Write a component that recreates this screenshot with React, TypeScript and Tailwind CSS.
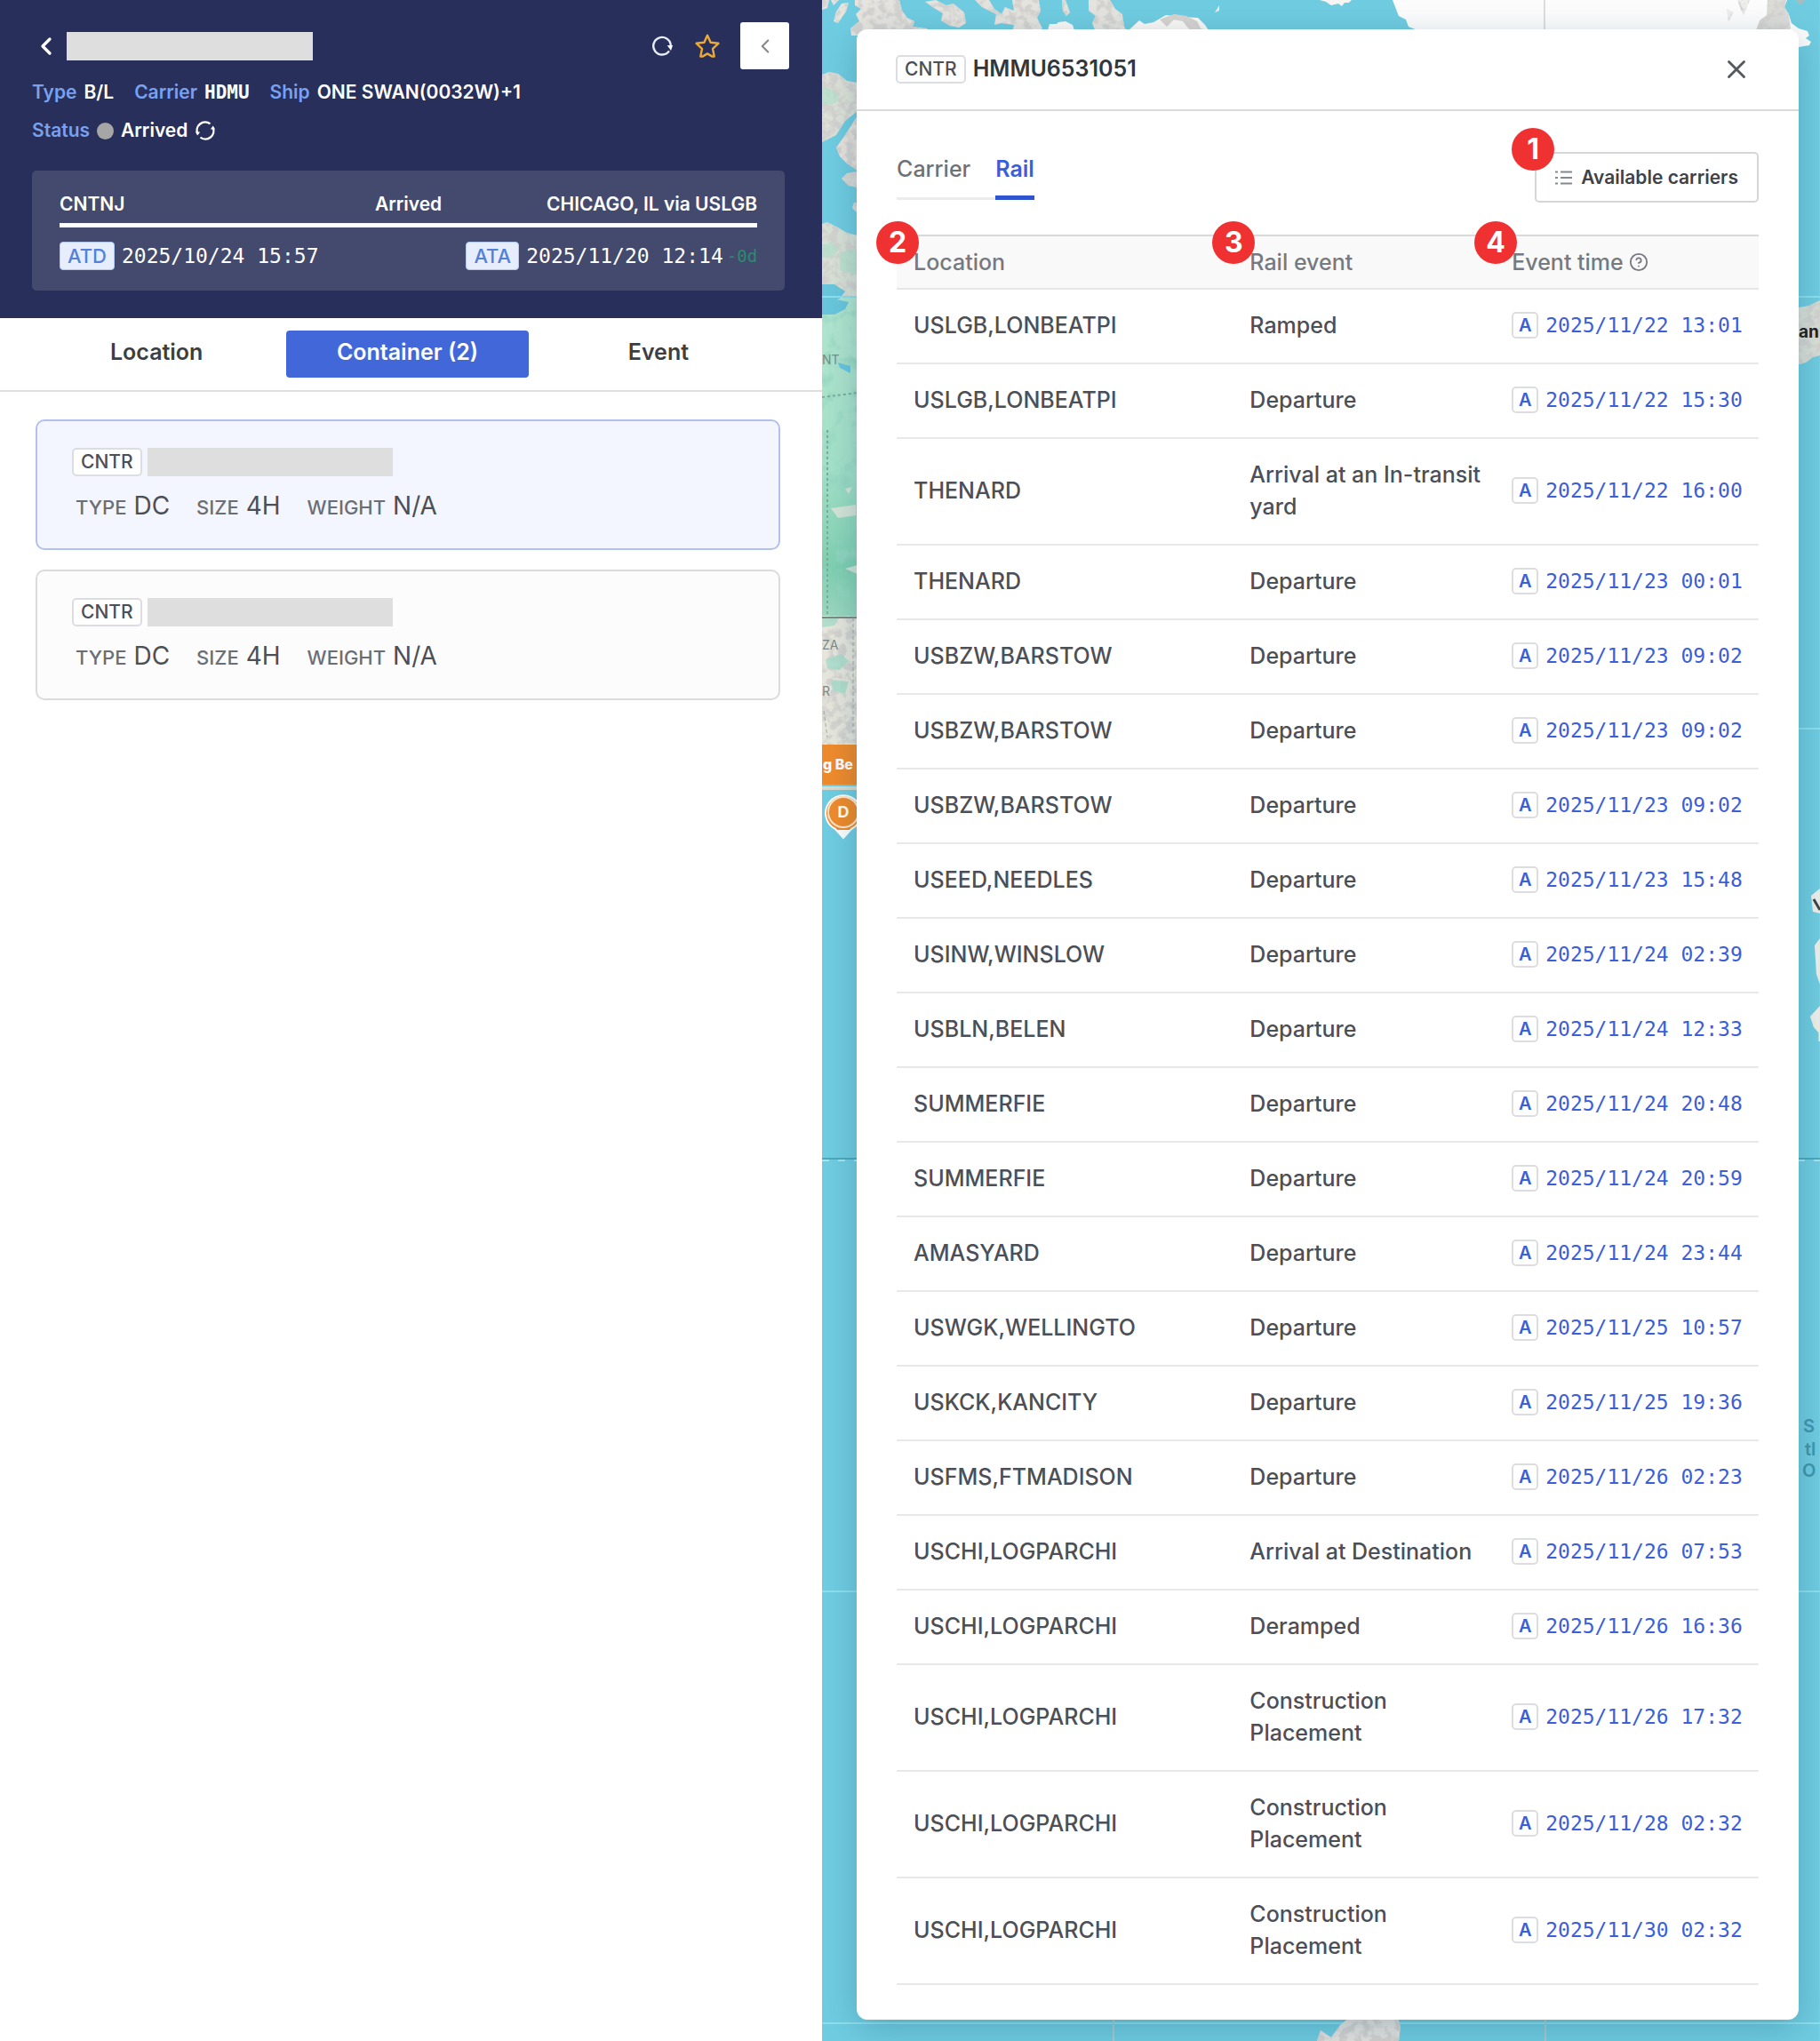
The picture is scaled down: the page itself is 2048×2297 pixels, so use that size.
import { ChevronLeft, CircleHelp, X } from "lucide-react";
import { useState } from "react";

const MONO = "font-['DejaVu_Sans_Mono',monospace]";

type RailEvent = { location: string; event: string; time: string };

const events: RailEvent[] = [
  { location: "USLGB,LONBEATPI", event: "Ramped", time: "2025/11/22 13:01" },
  { location: "USLGB,LONBEATPI", event: "Departure", time: "2025/11/22 15:30" },
  { location: "THENARD", event: "Arrival at an In-transit yard", time: "2025/11/22 16:00" },
  { location: "THENARD", event: "Departure", time: "2025/11/23 00:01" },
  { location: "USBZW,BARSTOW", event: "Departure", time: "2025/11/23 09:02" },
  { location: "USBZW,BARSTOW", event: "Departure", time: "2025/11/23 09:02" },
  { location: "USBZW,BARSTOW", event: "Departure", time: "2025/11/23 09:02" },
  { location: "USEED,NEEDLES", event: "Departure", time: "2025/11/23 15:48" },
  { location: "USINW,WINSLOW", event: "Departure", time: "2025/11/24 02:39" },
  { location: "USBLN,BELEN", event: "Departure", time: "2025/11/24 12:33" },
  { location: "SUMMERFIE", event: "Departure", time: "2025/11/24 20:48" },
  { location: "SUMMERFIE", event: "Departure", time: "2025/11/24 20:59" },
  { location: "AMASYARD", event: "Departure", time: "2025/11/24 23:44" },
  { location: "USWGK,WELLINGTO", event: "Departure", time: "2025/11/25 10:57" },
  { location: "USKCK,KANCITY", event: "Departure", time: "2025/11/25 19:36" },
  { location: "USFMS,FTMADISON", event: "Departure", time: "2025/11/26 02:23" },
  { location: "USCHI,LOGPARCHI", event: "Arrival at Destination", time: "2025/11/26 07:53" },
  { location: "USCHI,LOGPARCHI", event: "Deramped", time: "2025/11/26 16:36" },
  { location: "USCHI,LOGPARCHI", event: "Construction Placement", time: "2025/11/26 17:32" },
  { location: "USCHI,LOGPARCHI", event: "Construction Placement", time: "2025/11/28 02:32" },
  { location: "USCHI,LOGPARCHI", event: "Construction Placement", time: "2025/11/30 02:32" },
];

const RefreshIcon = ({ split = false }: { split?: boolean }) => (
  <svg width="24" height="24" viewBox="0 0 24 24" fill="none" aria-hidden="true">
    {split ? (
      <>
        <path d="M3.4 15.6A9.3 9.3 0 0 1 17.5 4.4M20.6 8.4A9.3 9.3 0 0 1 6.5 19.6" stroke="#fff" strokeWidth="2.4" />
        <path d="M1 13.4h5.2L3.2 17.6zM23 10.6h-5.2l3-4.2z" fill="#fff" />
      </>
    ) : (
      <>
        <path d="M20 17.4A9.8 9.8 0 1 1 21.8 11" stroke="#e8edfb" strokeWidth="2.4" />
        <path d="M17.8 11H24l-2 6z" fill="#fff" />
      </>
    )}
  </svg>
);

const StarIcon = () => (
  <svg width="30" height="30" viewBox="0 0 30 30" fill="none" aria-hidden="true">
    <path
      d="M15 2.8l3.6 8 8.8 1-6.4 6 1.7 8.8h-2.2L15 23.4l-5.5 3.2H7.3L9 17.8l-6.4-6 8.8-1z"
      stroke="#eba937"
      strokeWidth="2.4"
      strokeLinejoin="round"
    />
  </svg>
);

const ListIcon = () => (
  <svg width="19" height="18" viewBox="0 0 19 18" fill="none" stroke="#85888d" strokeWidth="1.8" aria-hidden="true">
    <path d="M6 2.5h13M6 9h13M6 15.5h13M0 2.5h3M0 9h3M0 15.5h3" />
  </svg>
);

const Marker = ({ n, className }: { n: number; className: string }) => (
  <span
    className={`absolute z-10 flex size-12 items-center justify-center rounded-full bg-[#ef3131] text-[32px] leading-none font-bold text-white ${className}`}
  >
    {n}
  </span>
);

const CntrTag = () => (
  <span className="flex h-8 items-center rounded-[5px] border-2 border-[#dcdde0] bg-white px-2 text-[21px] font-medium text-[#4c4f55]">
    CNTR
  </span>
);

const MapBackground = () => (
  <svg
    className="absolute inset-0 h-full w-full"
    viewBox="0 0 1123 2297"
    preserveAspectRatio="none"
    aria-hidden="true"
  >
    <defs>
      <filter id="terrain" x="0" y="0" width="100%" height="100%">
        <feTurbulence type="fractalNoise" baseFrequency="0.11" numOctaves="3" seed="4" result="noise" />
        <feColorMatrix
          in="noise"
          type="matrix"
          values="0 0 0 0 0.66  0 0 0 0 0.65  0 0 0 0 0.63  5 0 0 0 -2.1"
          result="shade"
        />
        <feComposite in="shade" in2="SourceGraphic" operator="in" result="clipped" />
        <feMerge>
          <feMergeNode in="SourceGraphic" />
          <feMergeNode in="clipped" />
        </feMerge>
      </filter>
      <filter id="forest" x="0" y="0" width="100%" height="100%">
        <feTurbulence type="fractalNoise" baseFrequency="0.06" numOctaves="3" seed="9" result="noise" />
        <feColorMatrix
          in="noise"
          type="matrix"
          values="0 0 0 0 0.3  0 0 0 0 0.68  0 0 0 0 0.54  3 0 0 0 -1.5"
          result="shade"
        />
        <feComposite in="shade" in2="SourceGraphic" operator="in" result="clipped" />
        <feMerge>
          <feMergeNode in="SourceGraphic" />
          <feMergeNode in="clipped" />
        </feMerge>
      </filter>
      <linearGradient id="green" x1="0" y1="0" x2="0" y2="1">
        <stop offset="0" stopColor="#b3e6d0" />
        <stop offset="0.55" stopColor="#a4e2c9" />
        <stop offset="0.85" stopColor="#7fd0b1" />
        <stop offset="1" stopColor="#9bd8bf" />
      </linearGradient>
    </defs>
    <rect width="1123" height="2297" fill="#70cde1" />

    {/* arctic islands */}
    <g fill="#e6e4df" filter="url(#terrain)">
      <path d="M0 0h8l-2 9-6 2zM10 0h9l-6 6zM22 4l8-1-3 10-9 13-5-2 3-11z" />
      <path d="M37 0h50l3 12 6 8 8 4-2 6 16 2 4 8H33l-1-8 10-8-4-8 6-6-7-4z" />
      <path d="M116 2l12-2 12 6 8-2 12 10 2 12-8 5-10-2-10-6 2-8-10-6z" />
      <path d="M172 0h16l6 10 8 6 4-8 10 4-2-12h30l2 12-4 8 6 12-8 6h-26l2-10-14-2-8 2 2-12-16-8z" />
      <path d="M270 0h4l5 14-4 4-4-6z" />
      <path d="M300 0h24l6 10 8 6 2 14 4 6h-36l-4-10 4-8-8-6z" />
    </g>
    <path d="M254 34l2-7h8l2-2 8-1 8 4 2 6zM345 34l12-11 6 4 10-2 14-8 18 2 18 1 8 8 4 6 10 5z" fill="#fbf9f6" />
    <path d="M380 22l16-6 14 2 12 6 4 8 8 2h-20l-8-10-10-2-8 8z" fill="#d9d5d1" filter="url(#terrain)" />
    <path d="M442 14l5-8v6z" fill="#eceff1" />

    {/* greenland */}
    <path d="M560 0h36l-3 3h-5l-3 4-4-3-8 2-6-4z" fill="#f7f6f4" />
    <path d="M642 0h444l-3 8 5 8 3 10 8 6 10 3 2 5-4 3 6 4-2 4-12 2-20 8H670l3-17-3-10-10-4-3-8-8-4z" fill="#fdfdfd" />
    <path d="M1064 0h21l-2 8 5 8 2 16-5 3h-34l4-12 8-6z" fill="#dcdcd9" filter="url(#terrain)" />
    <path d="M1030 0h14l-7 18zM1018 10l8 4-6 10z" fill="#eeeeec" filter="url(#terrain)" />
    <path d="M1096 0h10l-5 6z" fill="#a9bcbd" />
    <path d="M813 0v33" stroke="#dedede" strokeWidth="2" />

    {/* northern canada */}
    <g filter="url(#terrain)">
      <path d="M0 84l8-3 10 2 10 8 12 2v32L26 136l-10 16-16 8z" fill="#dfe3d8" />
      <path d="M40 130v62l-12-8-8-8-4-10 10-14z" fill="#ebe3dc" />
      <path d="M40 193v18l-10-2-8-8 6-6zM40 228v12l-6-6 2-6z" fill="#dcdcd8" />
      <path d="M0 252l6-2 12 6 10 6 12 3v80H0z" fill="#d9e2d6" />
    </g>
    <path d="M0 98l14 4 6 10-8 6-12-2zM0 276l12-4 6 10-8 8H0zM20 284l20-4v30l-20-6z" fill="#b4e2cd" opacity=".7" />
    <g filter="url(#forest)">
      <rect y="334" width="42" height="359" fill="url(#green)" />
    </g>
    <path d="M0 320h14l12 8-6 8-20 6zM0 340l12-4 18 4-4 8-12 6H0zM18 408l14 4v8l-12-6z" fill="#69c7dd" />
    <path d="M10 572l28-4v12l-20 3zM26 550l8-2-4 8zM26 640l14-4v10z" fill="#e5e7dd" opacity=".8" />
    <path d="M0 447l40-5M6 484v208" stroke="#7faa9c" strokeWidth="2" strokeDasharray="3 3" fill="none" />

    {/* west coast */}
    <g filter="url(#terrain)">
      <rect y="693" width="42" height="145" fill="#e7e7dc" />
    </g>
    <path d="M4 742l18-6 8 8-10 10-14-2zM10 765l20 2-4 14-14-4zM0 694h20l-6 10-14 2z" fill="#a6dfca" opacity=".8" />
    <path d="M0 695h42" stroke="#7d8b83" strokeWidth="2" />
    <path d="M35 695v130M2 800l4 30" stroke="#a3aca4" strokeWidth="1" fill="none" strokeDasharray="4 3" />
    <g fill="#7d8a88" fontFamily="Inter, sans-serif" fontSize="14">
      <text x="0" y="410">NT</text>
      <text x="0" y="731">ZA</text>
      <text x="0" y="783">R</text>
    </g>

    {/* graticule */}
    <path d="M0 334h42M1095 334h28M1095 820h28M0 1791h1123M0 2277h1123" stroke="#8de1ee" strokeWidth="2" />
    <path d="M0 1304h1123" stroke="#4fa8bd" strokeWidth="2" />
    <path d="M0 1306h1123" stroke="#a5e6f0" strokeWidth="2" strokeDasharray="8 10" />
    <path d="M328 2273v24M814 2273v24" stroke="#a6cbd2" strokeWidth="2" />

    {/* port label and pin */}
    <rect y="838" width="50" height="45" fill="#f08b2c" />
    <text x="1" y="866" fill="#fff" fontFamily="Inter, sans-serif" fontSize="16" fontWeight="800">
      g Be
    </text>
    <path d="M0 885h40v4H0z" fill="#d8ddd0" />
    <path d="M24 943l-9-10a20 20 0 1 1 18 0z" fill="#f08b2c" stroke="#fff" strokeWidth="2" />
    <path d="M16 934h16l-8 9z" fill="#fff" />
    <circle cx="24" cy="914" r="17" fill="#f08b2c" stroke="#ffe7cc" strokeWidth="2" />
    <text x="24" y="920" textAnchor="middle" fill="#fff" fontFamily="Inter, sans-serif" fontSize="18" fontWeight="700">
      D
    </text>

    {/* iceland, africa and the south atlantic */}
    <path d="M1099 346l12-2 12-6v62l-8 2-8 6-8 2z" fill="#dbe1d7" filter="url(#terrain)" />
    <text x="1099" y="380" fill="#222" fontFamily="Inter, sans-serif" fontSize="19" fontWeight="700">
      an
    </text>
    <path d="M1113 1008l10-8v28l-8-2zM1117 1064l6-8v52l-4-12zM1112 1144l11-12v32l-7-8z" fill="#eef1ec" />
    <path d="M1116 1012l7 12" stroke="#444" strokeWidth="3" />
    <path d="M1117 1148q0 8 6 10v14" stroke="#f0efdd" strokeWidth="3" fill="none" />
    <g fill="#4196ad" fontFamily="Inter, sans-serif" fontSize="20" fontWeight="600">
      <text x="1104" y="1612">S</text>
      <text x="1106" y="1638">tl</text>
      <text x="1103" y="1662">O</text>
    </g>

    {/* antarctica */}
    <path d="M597 2268h50l4 13-2 16h-92l4-12 12 8 10-14z" fill="#e6e4e1" filter="url(#terrain)" />
  </svg>
);

const ContainerCard = ({ selected = false }: { selected?: boolean }) => (
  <article
    className={`rounded-[10px] border-2 pt-[30px] pr-4 pb-[26px] pl-[39px] ${
      selected ? "border-[#b3c1ea] bg-[#f3f6fe]" : "border-[#dbdbdb] bg-[#fcfcfc]"
    }`}
  >
    <div className="flex items-center gap-[6px]">
      <CntrTag />
      <span className="h-8 w-[276px] bg-[#dedede]" />
    </div>
    <dl className="mt-[13px] flex gap-[30px] pl-1 text-[28px] leading-10 text-[#4c4f55]">
      {[
        ["TYPE", "DC"],
        ["SIZE", "4H"],
        ["WEIGHT", "N/A"],
      ].map(([label, value]) => (
        <div key={label} className="flex items-baseline gap-2">
          <dt className="text-[22px] font-medium text-[#6b6e75]">{label}</dt>
          <dd>{value}</dd>
        </div>
      ))}
    </dl>
  </article>
);

const TimeTag = ({ label, time }: { label: string; time: string }) => (
  <div className="flex h-8 items-center gap-2">
    <span className="flex h-8 items-center rounded-[4px] border border-[#b3caf8] bg-[#e6eefd] px-2 text-[22px] font-medium text-[#5580d8]">
      {label}
    </span>
    <span className={`${MONO} text-[23px]`}>{time}</span>
  </div>
);

const TrackingPanel = () => {
  const [tab, setTab] = useState("Container (2)");
  return (
    <aside className="w-[45.17%] shrink-0 bg-white">
      <header className="bg-[#272f5a] pt-[25px] pr-[42px] pb-[31px] pl-[36px]">
        <div className="flex h-[53px] items-center">
          <button aria-label="Back" className="text-white">
            <ChevronLeft size={32} strokeWidth={2.5} />
          </button>
          <span className="ml-[7px] h-8 w-[277px] bg-[#dedede]" />
          <div className="ml-auto flex items-center gap-6">
            <button aria-label="Refresh">
              <RefreshIcon />
            </button>
            <button aria-label="Add to favorites">
              <StarIcon />
            </button>
            <button
              aria-label="Collapse panel"
              className="-mr-[5px] -ml-[2px] flex h-[53px] w-[55px] items-center justify-center rounded-[3px] bg-white text-[#8a8a8a]"
            >
              <ChevronLeft size={26} />
            </button>
          </div>
        </div>
        <div className="mt-[10px] flex flex-wrap gap-x-[23px] text-[21px] leading-8 font-semibold text-white">
          <div className="flex gap-2">
            <span className="text-[#78a2f0]">Type</span>
            <span>B/L</span>
          </div>
          <div className="flex gap-2">
            <span className="text-[#78a2f0]">Carrier</span>
            <span className={MONO}>HDMU</span>
          </div>
          <div className="flex gap-2">
            <span className="text-[#78a2f0]">Ship</span>
            <span>ONE SWAN(0032W)+1</span>
          </div>
        </div>
        <div className="mt-[11px] flex items-center gap-2 text-[21px] leading-8 font-semibold text-white">
          <span className="text-[#78a2f0]">Status</span>
          <span className="size-[19px] rounded-full bg-[#a6a6a6]" />
          <span>Arrived</span>
          <RefreshIcon split />
        </div>

        <section className="mt-[29px] rounded-[5px] bg-[#434a6d] px-[31px] pt-[22px] pb-[23px] text-white">
          <div className="flex justify-between text-[21px] leading-8 font-semibold">
            <span className="flex-1">CNTNJ</span>
            <span>Arrived</span>
            <span className="flex-1 text-right">CHICAGO, IL via USLGB</span>
          </div>
          <div className="mt-[5px] h-[5px] bg-white" />
          <div className="mt-4 flex items-center justify-between">
            <TimeTag label="ATD" time="2025/10/24 15:57" />
            <div className="flex items-center gap-1">
              <TimeTag label="ATA" time="2025/11/20 12:14" />
              <span className={`${MONO} text-[19px] leading-8 text-[#2c8a70]`}>-0d</span>
            </div>
          </div>
        </section>
      </header>

      <nav className="grid grid-cols-3 gap-[10px] border-b-2 border-[#dedede] pt-[14px] pr-12 pb-[14px] pl-10">
        {["Location", "Container (2)", "Event"].map((name) => (
          <button
            key={name}
            onClick={() => setTab(name)}
            className={`h-[53px] rounded-[4px] pb-[3px] text-[25px] font-semibold ${
              tab === name ? "bg-[#4267d8] text-white" : "text-[#3c3e42]"
            }`}
          >
            {name}
          </button>
        ))}
      </nav>

      <div className="flex flex-col gap-[22px] pt-[31px] pr-[47px] pl-10">
        <ContainerCard selected />
        <ContainerCard />
      </div>
    </aside>
  );
};

const RailModal = () => {
  const [tab, setTab] = useState("Rail");
  return (
    <section className="relative rounded-xl bg-white pb-[39px] shadow-[0_10px_40px_rgba(0,60,90,0.25)]">
      <header className="flex h-[92px] items-center gap-2 border-b-2 border-[#d9dadc] pr-[53px] pl-11">
        <CntrTag />
        <h1 className="text-[25px] font-semibold text-[#33363c]">HMMU6531051</h1>
        <button aria-label="Close" className="ml-auto text-[#55585d]">
          <X size={34} strokeWidth={2} />
        </button>
      </header>

      <div className="px-[45px]">
        <div className="flex items-start justify-between pt-[46px]">
          <div className="mt-[3px] flex h-[51px] text-[25px] leading-8 font-medium">
            {["Carrier", "Rail"].map((name) => (
              <button
                key={name}
                onClick={() => setTab(name)}
                className={
                  tab === name
                    ? "border-b-[5px] border-[#2f54cf] pb-[14px] font-semibold text-[#3a5fd9]"
                    : "border-b-[3px] border-[#ececec] pr-7 pb-4 text-[#6e7177]"
                }
              >
                {name}
              </button>
            ))}
          </div>
          <button className="relative flex h-[57px] items-center gap-[10px] rounded-[5px] border-2 border-[#d5d6d9] bg-white px-[21px] text-[21px] font-semibold text-[#3f4247]">
            <Marker n={1} className="-top-[29px] -left-7" />
            <ListIcon />
            Available carriers
          </button>
        </div>

        <table className="mt-9 w-full table-fixed border-collapse text-left text-[25px] leading-9">
          <colgroup>
            <col className="w-[39%]" />
            <col className="w-[30.4%]" />
            <col />
          </colgroup>
          <thead>
            <tr className="border-t-2 border-b-2 border-t-[#d8d9db] border-b-[#e6e6e6] bg-[#f9f9f9] text-[#76797f]">
              <th className="relative px-[19px] py-[11px] font-medium">
                <Marker n={2} className="-top-[17px] -left-[23px]" />
                Location
              </th>
              <th className="relative px-[19px] py-[11px] font-medium">
                <Marker n={3} className="-top-[17px] -left-[23px]" />
                Rail event
              </th>
              <th className="relative px-[19px] py-[11px] font-medium">
                <Marker n={4} className="-top-[17px] -left-[23px]" />
                <span className="flex items-center gap-[6px]">
                  Event time
                  <CircleHelp size={22} strokeWidth={2} />
                </span>
              </th>
            </tr>
          </thead>
          <tbody className="font-medium text-[#4c4f55]">
            {events.map((row, i) => (
              <tr key={i} className="border-b-2 border-[#e8e8e8]">
                <td className="pt-[22px] pr-2 pb-6 pl-[19px]">{row.location}</td>
                <td className="pt-[22px] pr-2 pb-6 pl-[19px]">{row.event}</td>
                <td className="pt-[22px] pr-2 pb-6 pl-[19px]">
                  <span className="flex items-center gap-2 whitespace-nowrap text-[#3a5fd9]">
                    <span className="flex size-[30px] items-center justify-center rounded-[5px] border-2 border-[#dcdde0] text-xl leading-none font-semibold">
                      A
                    </span>
                    <span className={`${MONO} text-[23px] font-normal`}>{row.time}</span>
                  </span>
                </td>
              </tr>
            ))}
          </tbody>
        </table>
      </div>
    </section>
  );
};

const App = () => (
  <div className="flex min-h-screen bg-white font-['Inter',sans-serif]">
    <TrackingPanel />
    <main className="relative flex-1 overflow-hidden pt-[33px] pr-6 pb-6 pl-[39px]">
      <MapBackground />
      <RailModal />
    </main>
  </div>
);

export default App;
